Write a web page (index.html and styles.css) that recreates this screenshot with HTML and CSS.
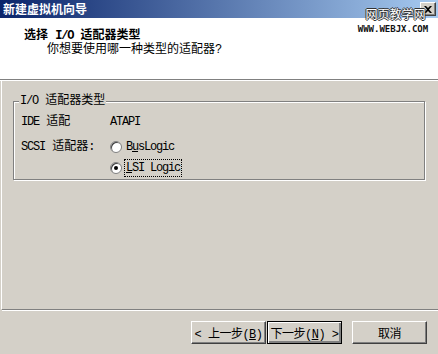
FILE: index.html
```html
<!DOCTYPE html>
<html lang="zh-CN">
<head>
  <meta charset="UTF-8">
  <title>新建虚拟机向导</title>
  <link rel="stylesheet" href="styles.css">
</head>
<body>
  <div class="window">
    <div class="titlebar">
      <span class="title">新建虚拟机向导</span>
      <span class="close">
        <svg width="8" height="7" viewBox="0 0 8 7"><path d="M0 0h2l2 2 2-2h2L5 3.5 8 7H6L4 5 2 7H0l3-3.5z" fill="#000"/></svg>
      </span>
    </div>

    <div class="header">
      <div class="head-title">选择 <span class="en">I/O</span> 适配器类型</div>
      <div class="head-sub">你想要使用哪一种类型的适配器?</div>
    </div>

    <div class="watermark">
      <div class="wm-cn">网页教学网</div>
      <div class="wm-en">WWW.WEBJX.COM</div>
    </div>

    <div class="content">
      <fieldset class="group">
        <legend><span class="en">I/O</span> 适配器类型</legend>
        <div class="rows">
          <span class="row-label"><span class="en">IDE</span> 适配</span>
          <span class="row-value en">ATAPI</span>

          <span class="row-label low"><span class="en">SCSI</span> 适配器:</span>
          <label class="radio low">
            <span class="dot"></span>
            <span class="en">B<u>u</u>sLogic</span>
          </label>

          <span class="row-label"></span>
          <label class="radio checked">
            <span class="dot"></span>
            <span class="en focus"><u>L</u>SI Logic</span>
          </label>
        </div>
      </fieldset>
    </div>

    <div class="separator"></div>

    <div class="buttons">
      <button class="btn">&lt; 上一步(<u>B</u>)</button>
      <button class="btn default">下一步(<u>N</u>) &gt;</button>
      <button class="btn cancel">取消</button>
    </div>
  </div>
</body>
</html>
```

FILE: styles.css
```css
body {
  margin: 0;
  background: #d4d0c8;
  font-family: "Liberation Mono", "Noto Sans CJK SC", monospace;
  font-size: 12px;
  color: #000;
}
.window {
  position: relative;
  width: 438px;
  height: 354px;
  overflow: hidden;
}
.en {
  letter-spacing: -1.2px;
}

/* title bar */
.titlebar {
  height: 18px;
  display: flex;
  align-items: center;
  padding-left: 3px;
  background: linear-gradient(to right, #0a246a, #a6caf0);
}
.title {
  color: #fff;
  font-weight: bold;
  font-family: "Noto Sans CJK SC", sans-serif;
  line-height: 18px;
}
.close {
  margin-left: auto;
  margin-right: 2px;
  width: 16px;
  height: 14px;
  box-sizing: border-box;
  background: #d4d0c8;
  border-top: 1px solid #fff;
  border-left: 1px solid #fff;
  border-right: 1px solid #404040;
  border-bottom: 1px solid #404040;
  box-shadow: inset -1px -1px 0 #808080;
  display: flex;
  align-items: center;
  justify-content: center;
}

/* header */
.header {
  height: 50px;
  background: #fff;
  padding: 11px 0 0 24px;
  border-bottom: 1px solid #808080;
  box-shadow: 0 1px 0 #fff;
  line-height: 14px;
}
.head-title {
  font-weight: bold;
}
.head-sub {
  padding-left: 23px;
}
.watermark {
  position: absolute;
  left: 356px;
  top: 7px;
  width: 74px;
  text-align: center;
}
.wm-cn {
  font-family: "Noto Sans CJK SC", sans-serif;
  font-size: 12px;
  line-height: 14px;
  color: #fff;
  padding-left: 5px;
  text-shadow: 1px 0 0 #333, -1px 0 0 #333, 0 1px 0 #333, 0 -1px 0 #333;
}
.wm-en {
  margin-top: 3px;
  font-family: "DejaVu Sans Mono", monospace;
  font-weight: bold;
  font-size: 9px;
  line-height: 10px;
  color: #111;
}

/* group */
.content {
  height: 229px;
  padding-top: 14px;
  box-sizing: border-box;
  border-left: 1px solid #fff;
  margin-left: 1px;
}
.group {
  margin: 0 0 0 11px;
  padding: 0 0 0 7px;
  width: 412px;
  box-sizing: border-box;
  border: 1px solid #808080;
  box-shadow: 1px 1px 0 #fff, inset 1px 1px 0 #fff;
}
.group legend {
  margin-left: -2px;
  padding: 0 1px;
  line-height: 14px;
  background: #d4d0c8;
}
.rows {
  display: grid;
  grid-template-columns: 89px auto;
  grid-template-rows: 20px 25px 22px;
  align-items: center;
  padding-top: 4px;
}
.low {
  align-self: end;
}
.row-label, .row-value {
  line-height: 20px;
}
.radio {
  display: flex;
  align-items: center;
  gap: 4px;
  height: 20px;
}
.dot {
  width: 12px;
  height: 12px;
  box-sizing: border-box;
  border-radius: 50%;
  background: #fff;
  border: 1px solid #808080;
  box-shadow: inset 1px 1px 0 #404040;
  display: flex;
  align-items: center;
  justify-content: center;
}
.radio.checked .dot::after {
  content: "";
  width: 4px;
  height: 4px;
  border-radius: 50%;
  background: #000;
}
.focus {
  outline: 1px dotted #000;
  outline-offset: 1px;
  line-height: 14px;
}

/* bottom */
.separator {
  margin-left: 2px;
  border-top: 1px solid #808080;
  border-bottom: 1px solid #fff;
}
.buttons {
  display: flex;
  justify-content: flex-end;
  padding: 10px 11px 0 0;
}
.btn {
  width: 75px;
  height: 23px;
  padding: 0;
  font-family: "Liberation Mono", "Noto Sans CJK SC", monospace;
  font-size: 12px;
  color: #000;
  background: #d4d0c8;
  border-top: 1px solid #fff;
  border-left: 1px solid #fff;
  border-right: 1px solid #404040;
  border-bottom: 1px solid #404040;
  box-shadow: inset -1px -1px 0 #808080;
  letter-spacing: -0.5px;
}
.btn.default {
  margin-left: 1px;
  border: 1px solid #000;
  box-shadow: inset 1px 1px 0 #fff, inset -2px -2px 0 #808080, inset -1px -1px 0 #404040;
}
.btn.cancel {
  margin-left: 10px;
}
```
